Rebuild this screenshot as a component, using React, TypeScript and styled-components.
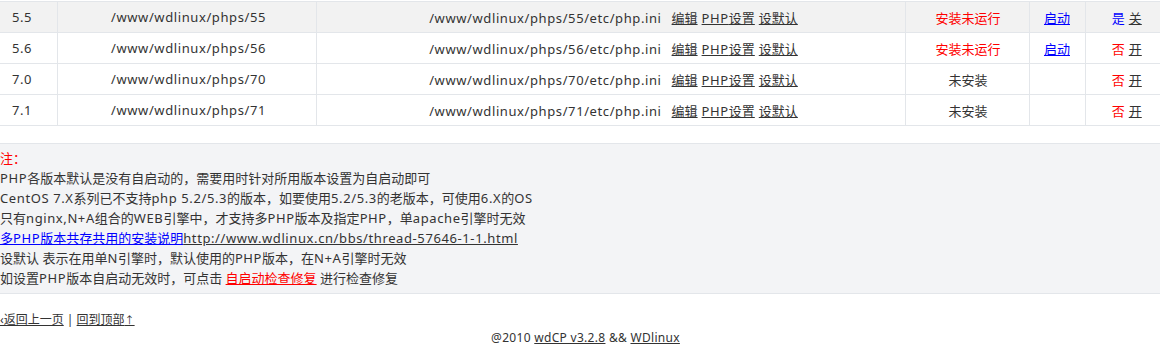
import styled, { createGlobalStyle } from 'styled-components';

const GlobalStyle = createGlobalStyle`
  body {
    margin: 0;
    background: #fff;
    color: #333;
    font-family: 'Microsoft YaHei', 'Noto Sans', 'Noto Sans CJK SC', sans-serif;
    font-size: 13px;
    overflow: hidden;
  }
`;

const Page = styled.div`
  width: 1160px;
  padding-top: 1px;
`;

const Table = styled.table`
  width: 1160px;
  border-collapse: collapse;
  table-layout: fixed;
  border-top: 1px solid #e3e6ea;
`;

const Row = styled.tr<{ $active?: boolean }>`
  background: ${props => (props.$active ? '#f2f2f2' : '#fff')};
`;

const Cell = styled.td<{ $left?: boolean; $shift?: number }>`
  height: 30px;
  padding: 0 0 0 ${props => (props.$left ? 12 : props.$shift || 0)}px;
  text-align: ${props => (props.$left ? 'left' : 'center')};
  border-bottom: 1px solid #e3e6ea;
  border-left: 1px solid #e3e6ea;
  white-space: nowrap;

  &:first-child {
    border-left: none;
  }
`;

// latin runs render a touch wider than the cjk font gives them
const L = styled.span`
  letter-spacing: 0.6px;
`;

const Link = styled.a<{ $color?: string }>`
  color: ${props => props.$color || '#333'};
  text-decoration: underline;
  cursor: pointer;
`;

const Actions = styled.span`
  margin-left: 10px;

  a + a {
    margin-left: 4px;
  }
`;

const Status = styled.span<{ $red?: boolean }>`
  color: ${props => (props.$red ? '#ff0000' : '#333')};
`;

const Flag = styled.span<{ $on?: boolean }>`
  color: ${props => (props.$on ? '#0000ff' : '#ff0000')};
  margin-right: 4px;
`;

const Spacer = styled.div`
  height: 17px;
`;

const Notes = styled.div`
  background: #f3f4f6;
  border-top: 1px solid #e3e6ea;
  border-bottom: 1px solid #e3e6ea;
  padding: 4px 0 5px;
  line-height: 20px;
`;

const NoteTitle = styled.div`
  color: #ff0000;
`;

const Nav = styled.div`
  margin-top: 16px;
  line-height: 20px;
  font-size: 12px;
`;

const Arrow = styled.span`
  font-size: 10px;
`;

const Copyright = styled.div`
  text-align: center;
  line-height: 20px;
  margin-top: -2px;
  padding-left: 11px;
  font-size: 12px;
  letter-spacing: 0.3px;
`;

interface PhpVersion {
  ver: string;
  dir: string;
  installed: boolean;
  auto: boolean;
}

const versions: PhpVersion[] = [
  { ver: '5.5', dir: '55', installed: true, auto: true },
  { ver: '5.6', dir: '56', installed: true, auto: false },
  { ver: '7.0', dir: '70', installed: false, auto: false },
  { ver: '7.1', dir: '71', installed: false, auto: false },
];

const App = () => {
  return (
    <Page>
      <GlobalStyle />
      <Table>
        <colgroup>
          <col style={{ width: 57 }} />
          <col style={{ width: 259 }} />
          <col style={{ width: 589 }} />
          <col style={{ width: 124 }} />
          <col style={{ width: 56 }} />
          <col style={{ width: 75 }} />
        </colgroup>
        <tbody>
          {versions.map((v, i) => (
            <Row key={v.ver} $active={i === 0}>
              <Cell $left>
                <L>{v.ver}</L>
              </Cell>
              <Cell $shift={4}>
                <L>/www/wdlinux/phps/{v.dir}</L>
              </Cell>
              <Cell $shift={6}>
                <L>/www/wdlinux/phps/{v.dir}/etc/php.ini</L>
                <Actions>
                  <Link>编辑</Link>
                  <Link>
                    <L>PHP</L>设置
                  </Link>
                  <Link>设默认</Link>
                </Actions>
              </Cell>
              <Cell $shift={2}>
                {v.installed ? <Status $red>安装未运行</Status> : <Status>未安装</Status>}
              </Cell>
              <Cell>{v.installed && <Link $color="#0000ff">启动</Link>}</Cell>
              <Cell $shift={8}>
                <Flag $on={v.auto}>{v.auto ? '是' : '否'}</Flag>
                <Link>{v.auto ? '关' : '开'}</Link>
              </Cell>
            </Row>
          ))}
        </tbody>
      </Table>
      <Spacer />
      <Notes>
        <NoteTitle>注：</NoteTitle>
        <div>
          <L>PHP</L>各版本默认是没有自启动的，需要用时针对所用版本设置为自启动即可
        </div>
        <div>
          <L>CentOS 7.X</L>系列已不支持<L>php 5.2/5.3</L>的版本，如要使用<L>5.2/5.3</L>的老版本，可使用<L>6.X</L>的<L>OS</L>
        </div>
        <div>
          只有<L>nginx,N+A</L>组合的<L>WEB</L>引擎中，才支持多<L>PHP</L>版本及指定<L>PHP</L>，单<L>apache</L>引擎时无效
        </div>
        <div>
          <Link $color="#0000ff">
            多<L>PHP</L>版本共存共用的安装说明
          </Link>
          <Link>
            <L>http://www.wdlinux.cn/bbs/thread-57646-1-1.html</L>
          </Link>
        </div>
        <div>
          设默认 表示在用单<L>N</L>引擎时，默认使用的<L>PHP</L>版本，在<L>N+A</L>引擎时无效
        </div>
        <div>
          如设置<L>PHP</L>版本自启动无效时，可点击 <Link $color="#ff0000">自启动检查修复</Link> 进行检查修复
        </div>
      </Notes>
      <Nav>
        <Link>‹返回上一页</Link> | <Link>
          回到顶部<Arrow>↑</Arrow>
        </Link>
      </Nav>
      <Copyright>
        @2010 <Link>wdCP v3.2.8</Link> &amp;&amp; <Link>WDlinux</Link>
      </Copyright>
    </Page>
  );
};

export default App;
